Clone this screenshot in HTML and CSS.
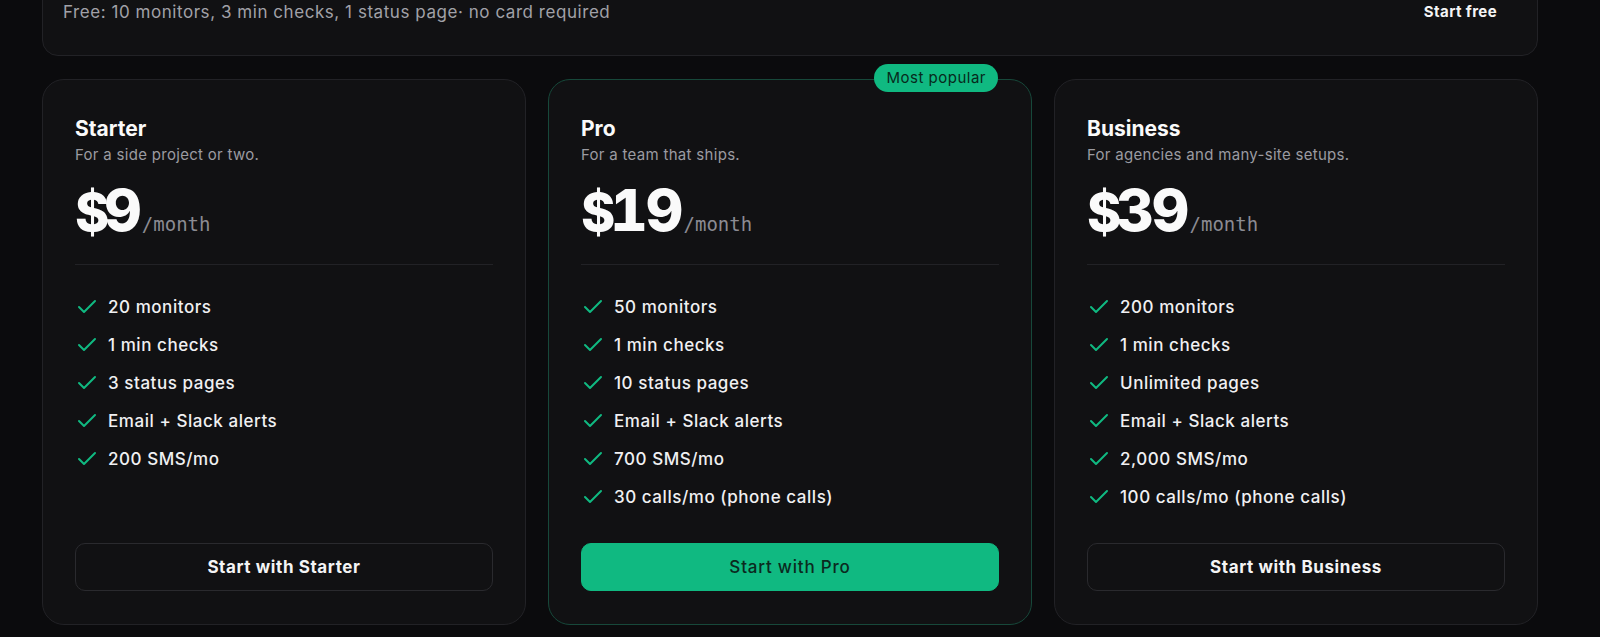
FILE: index.html
```html
<!DOCTYPE html>
<html lang="en">

<head>
	<meta charset="UTF-8">
	<meta name="viewport" content="width=device-width, initial-scale=1.0">
	<title>Pricing</title>
	<link rel="stylesheet" href="styles.css">
</head>

<body>
	<div class="wrap">

		<div class="free-bar">
			<p class="free-text">Free: 10 monitors, 3 min checks, 1 status page· no card required</p>
			<a class="free-link" href="#">Start free</a>
		</div>

		<div class="plans">
			<div class="plan">
				<h3 class="plan-name">Starter</h3>
				<p class="plan-desc">For a side project or two.</p>
				<div class="price"><span class="amount"><span class="cur">$</span>9</span><span class="per">/month</span></div>
				<hr class="divider">
				<ul class="features">
					<li><svg class="check" viewBox="0 0 24 24"><path d="M20 6 9 17l-5-5"/></svg>20 monitors</li>
					<li><svg class="check" viewBox="0 0 24 24"><path d="M20 6 9 17l-5-5"/></svg>1 min checks</li>
					<li><svg class="check" viewBox="0 0 24 24"><path d="M20 6 9 17l-5-5"/></svg>3 status pages</li>
					<li><svg class="check" viewBox="0 0 24 24"><path d="M20 6 9 17l-5-5"/></svg>Email + Slack alerts</li>
					<li><svg class="check" viewBox="0 0 24 24"><path d="M20 6 9 17l-5-5"/></svg>200 SMS/mo</li>
				</ul>
				<a class="btn" href="#">Start with Starter</a>
			</div>

			<div class="plan plan-pro">
				<span class="badge">Most popular</span>
				<h3 class="plan-name">Pro</h3>
				<p class="plan-desc">For a team that ships.</p>
				<div class="price"><span class="amount"><span class="cur">$</span>19</span><span class="per">/month</span></div>
				<hr class="divider">
				<ul class="features">
					<li><svg class="check" viewBox="0 0 24 24"><path d="M20 6 9 17l-5-5"/></svg>50 monitors</li>
					<li><svg class="check" viewBox="0 0 24 24"><path d="M20 6 9 17l-5-5"/></svg>1 min checks</li>
					<li><svg class="check" viewBox="0 0 24 24"><path d="M20 6 9 17l-5-5"/></svg>10 status pages</li>
					<li><svg class="check" viewBox="0 0 24 24"><path d="M20 6 9 17l-5-5"/></svg>Email + Slack alerts</li>
					<li><svg class="check" viewBox="0 0 24 24"><path d="M20 6 9 17l-5-5"/></svg>700 SMS/mo</li>
					<li><svg class="check" viewBox="0 0 24 24"><path d="M20 6 9 17l-5-5"/></svg>30 calls/mo (phone calls)</li>
				</ul>
				<a class="btn btn-primary" href="#">Start with Pro</a>
			</div>

			<div class="plan">
				<h3 class="plan-name">Business</h3>
				<p class="plan-desc">For agencies and many-site setups.</p>
				<div class="price"><span class="amount"><span class="cur">$</span>39</span><span class="per">/month</span></div>
				<hr class="divider">
				<ul class="features">
					<li><svg class="check" viewBox="0 0 24 24"><path d="M20 6 9 17l-5-5"/></svg>200 monitors</li>
					<li><svg class="check" viewBox="0 0 24 24"><path d="M20 6 9 17l-5-5"/></svg>1 min checks</li>
					<li><svg class="check" viewBox="0 0 24 24"><path d="M20 6 9 17l-5-5"/></svg>Unlimited pages</li>
					<li><svg class="check" viewBox="0 0 24 24"><path d="M20 6 9 17l-5-5"/></svg>Email + Slack alerts</li>
					<li><svg class="check" viewBox="0 0 24 24"><path d="M20 6 9 17l-5-5"/></svg>2,000 SMS/mo</li>
					<li><svg class="check" viewBox="0 0 24 24"><path d="M20 6 9 17l-5-5"/></svg>100 calls/mo (phone calls)</li>
				</ul>
				<a class="btn" href="#">Start with Business</a>
			</div>
		</div>

	</div>
</body>

</html>
```

FILE: styles.css
```css
* {
	box-sizing: border-box;
}

body {
	margin: 0;
	background: #0b0b0d;
	color: #f4f4f5;
	font-family: Inter, "Noto Sans", sans-serif;
	overflow: hidden;
}

.wrap {
	/* page is scrolled a bit: the free bar starts above the viewport */
	width: 1496px;
	margin: -33px 0 0 42px;
}

/* free plan strip */
.free-bar {
	display: flex;
	justify-content: space-between;
	align-items: center;
	padding: 24px 20px 23px 20px;
	background: #111113;
	border: 1px solid #222226;
	border-radius: 16px;
}

.free-text {
	margin: 0;
	font-size: 17px;
	line-height: 20px;
	letter-spacing: 0.55px;
	color: #a1a1a8;
}

.free-link {
	padding: 10px 20px;
	font-size: 15px;
	line-height: 20px;
	font-weight: 700;
	letter-spacing: 0.4px;
	color: #f4f4f5;
	text-decoration: none;
}

/* plan cards */
.plans {
	display: grid;
	grid-template-columns: repeat(3, 1fr);
	gap: 22px;
	margin-top: 23px;
}

.plan {
	position: relative;
	display: flex;
	flex-direction: column;
	padding: 35px 32px 33px;
	background: #111113;
	border: 1px solid #222226;
	border-radius: 22px;
}

.plan-pro {
	border-color: #17483a;
}

.badge {
	position: absolute;
	top: -16px;
	right: 33px;
	padding: 4px 12px;
	font-size: 15px;
	line-height: 20px;
	letter-spacing: 0.5px;
	color: #072a1c;
	background: #10b981;
	border-radius: 999px;
}

.plan-name {
	margin: 0;
	font-size: 21px;
	line-height: 28px;
	font-weight: 700;
	color: #fafafa;
}

.plan-desc {
	margin: 2px 0 0;
	font-size: 15px;
	line-height: 20px;
	letter-spacing: 0.3px;
	color: #9b9ba1;
}

.price {
	display: flex;
	align-items: baseline;
	gap: 2px;
	height: 58px;
	margin-top: 16px;
}

.amount {
	font-size: 58px;
	line-height: 58px;
	font-weight: 800;
	letter-spacing: -0.03em;
	font-feature-settings: "tnum";
	color: #fafafa;
}

.cur {
	font-size: 52px;
	line-height: 40px;
	letter-spacing: -0.1em;
}

.per {
	font-family: "DejaVu Sans Mono", "Liberation Mono", monospace;
	font-size: 19px;
	line-height: 24px;
	color: #8b8b92;
}

.divider {
	margin: 25px 0 0;
	border: 0;
	border-top: 1px solid #222226;
}

.features {
	display: flex;
	flex-direction: column;
	gap: 14px;
	margin: 30px 0 34px;
	padding: 0;
	list-style: none;
}

.features li {
	display: flex;
	align-items: center;
	gap: 9px;
	font-size: 17px;
	line-height: 24px;
	font-weight: 500;
	letter-spacing: 0.55px;
	color: #f0f0f2;
}

.check {
	width: 24px;
	height: 24px;
	flex: none;
	fill: none;
	stroke: #10b981;
	stroke-width: 2;
	stroke-linecap: round;
	stroke-linejoin: round;
}

.btn {
	display: flex;
	align-items: center;
	justify-content: center;
	height: 48px;
	margin-top: auto;
	font-size: 17px;
	font-weight: 700;
	letter-spacing: 0.6px;
	color: #f4f4f5;
	text-decoration: none;
	border: 1px solid #2a2a2e;
	border-radius: 10px;
}

.btn-primary {
	font-weight: 500;
	letter-spacing: 0.8px;
	color: #0b2a1e;
	background: #10b981;
	border-color: #10b981;
}
```
